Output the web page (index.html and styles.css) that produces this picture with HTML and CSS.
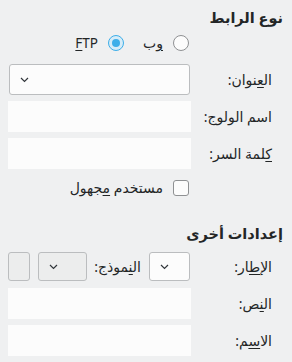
FILE: index.html
```html
<!DOCTYPE html>
<html lang="ar" dir="rtl">
<head>
<meta charset="UTF-8">
<title>إعدادات الرابط</title>
<link rel="stylesheet" href="styles.css">
</head>
<body>
<div class="panel">
    <h3 class="section-title">نوع الرابط</h3>
    <div class="form">
        <span></span>
        <div class="radios">
            <label class="radio"><span class="dot"></span><span class="radio-text"><u>و</u>ب</span></label>
            <label class="radio checked"><span class="dot"></span><span class="radio-text latin" dir="ltr"><u>F</u>TP</span></label>
        </div>

        <label class="label">ال<u>ع</u>نوان:</label>
        <div class="combo wide">
            <svg class="chevron" width="9" height="6" viewBox="0 0 9 6"><path d="M1 1 L4.5 4.5 L8 1" fill="none" stroke="#31363b" stroke-width="1.2"/></svg>
        </div>

        <label class="label">اسم الولوج:</label>
        <div class="field"></div>

        <label class="label"><u>ك</u>لمة السر:</label>
        <div class="field"></div>

        <span></span>
        <label class="check"><span class="box"></span><span>مستخدم <u>م</u>جهول</span></label>
    </div>

    <h3 class="section-title second">إعدادات أخرى</h3>
    <div class="form other">
        <label class="label">الإ<u>ط</u>ار:</label>
        <div class="frame-row">
            <div class="combo small">
                <svg class="chevron" width="9" height="6" viewBox="0 0 9 6"><path d="M1 1 L4.5 4.5 L8 1" fill="none" stroke="#31363b" stroke-width="1.2"/></svg>
            </div>
            <label class="inline-label">ال<u>ن</u>موذج:</label>
            <div class="combo button-combo">
                <svg class="chevron" width="9" height="6" viewBox="0 0 9 6"><path d="M1 1 L4.5 4.5 L8 1" fill="none" stroke="#31363b" stroke-width="1.2"/></svg>
            </div>
            <div class="tool-button"></div>
        </div>

        <label class="label">ال<u>ن</u>ص:</label>
        <div class="field"></div>

        <label class="label">الا<u>س</u>م:</label>
        <div class="field"></div>
    </div>
</div>
</body>
</html>
```

FILE: styles.css
```css
body {
    margin: 0;
    background-color: #eff0f1;
    color: #232627;
    font-family: "Noto Sans", "DejaVu Sans", sans-serif;
    font-size: 14px;
}
.panel {
    padding: 6px 9px 0 8px;
}
.section-title {
    margin: 0;
    font-size: 14.5px;
    font-weight: bold;
    line-height: 22px;
}
.section-title.second {
    margin-top: 26px;
}
.form {
    display: grid;
    grid-template-columns: 72px 183px;
    column-gap: 9px;
    row-gap: 6px;
    padding-right: 11px;
    align-items: center;
    line-height: 18px;
}
.form.other {
    margin-top: 8px;
}
.label {
    text-align: right;
    white-space: nowrap;
}
.latin {
    font-size: 13.5px;
}
u {
    text-decoration: underline;
    text-underline-offset: 2px;
}
.radios {
    display: flex;
    gap: 19px;
    height: 18px;
    align-items: center;
    margin-top: 6px;
    margin-bottom: 6px;
    padding-right: 2px;
}
.radio, .check {
    display: flex;
    align-items: center;
    gap: 10px;
    white-space: nowrap;
}
.dot {
    width: 14px;
    height: 14px;
    border: 1px solid #8f9193;
    border-radius: 50%;
    background: #fcfcfc;
    position: relative;
}
.radio.checked .dot {
    border-color: #3daee9;
    background: #d6ecf8;
}
.radio.checked .dot::after {
    content: "";
    position: absolute;
    top: 3px;
    left: 3px;
    width: 8px;
    height: 8px;
    border-radius: 50%;
    background: #3daee9;
}
.combo {
    display: flex;
    align-items: center;
    height: 27px;
    border: 1px solid #bbbdbf;
    border-radius: 3px;
    background: #fcfcfc;
}
.combo.wide {
    height: 29px;
    margin-right: 1px;
    margin-left: 1px;
}
.chevron {
    margin-right: auto;
    margin-left: 10px;
}
.field {
    height: 31px;
    background: #fcfcfc;
}
.check {
    height: 16px;
    margin-top: 5px;
    padding-right: 2px;
}
.box {
    width: 14px;
    height: 14px;
    border: 1px solid #8f9193;
    border-radius: 3px;
    background: #fcfcfc;
}
.frame-row {
    display: flex;
    align-items: center;
    gap: 8px;
    margin-bottom: 1px;
    padding-right: 1px;
}
.combo.small {
    width: 39px;
}
.combo.button-combo {
    width: 47px;
    background: #eceded;
}
.inline-label {
    margin-left: -1px;
    white-space: nowrap;
}
.tool-button {
    width: 20px;
    height: 27px;
    border: 1px solid #bbbdbf;
    border-radius: 3px;
    background: #eceded;
}
```
